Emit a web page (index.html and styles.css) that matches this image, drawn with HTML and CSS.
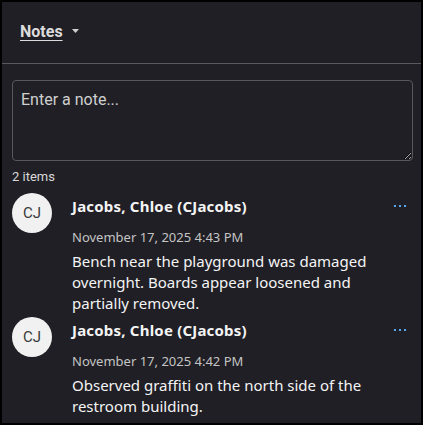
FILE: index.html
```html
<!DOCTYPE html>
<html>
<head>
<meta charset="utf-8">
<link rel="stylesheet" href="styles.css">
</head>
<body>
<div class="panel">
  <div class="header">
    <span class="title">Notes</span>
    <svg class="caret" width="7" height="4" viewBox="0 0 7 4"><path d="M0 0h7L3.5 4z" fill="#d0d0d0"/></svg>
  </div>
  <div class="content">
    <textarea class="note-input" placeholder="Enter a note..."></textarea>
    <div class="count">2 items</div>
    <div class="list">
      <div class="item">
        <div class="avatar">CJ</div>
        <div class="body">
          <div class="top">
            <span class="name">Jacobs, Chloe (CJacobs)</span>
            <svg class="more" width="12" height="4" viewBox="0 0 12 4"><rect x="0" y="1" width="2" height="2" fill="#5aa6ea"/><rect x="5" y="1" width="2" height="2" fill="#5aa6ea"/><rect x="10" y="1" width="2" height="2" fill="#5aa6ea"/></svg>
          </div>
          <div class="date">November 17, 2025 4:43 PM</div>
          <div class="text">Bench near the playground was damaged overnight. Boards appear loosened and partially removed.</div>
        </div>
      </div>
      <div class="item">
        <div class="avatar">CJ</div>
        <div class="body">
          <div class="top">
            <span class="name">Jacobs, Chloe (CJacobs)</span>
            <svg class="more" width="12" height="4" viewBox="0 0 12 4"><rect x="0" y="1" width="2" height="2" fill="#5aa6ea"/><rect x="5" y="1" width="2" height="2" fill="#5aa6ea"/><rect x="10" y="1" width="2" height="2" fill="#5aa6ea"/></svg>
          </div>
          <div class="date">November 17, 2025 4:42 PM</div>
          <div class="text">Observed graffiti on the north side of the restroom building.</div>
        </div>
      </div>
    </div>
  </div>
</div>
</body>
</html>
```
FILE: styles.css
```css
html, body {
  margin: 0;
  padding: 0;
  background: #000;
}
.panel {
  width: 419px;
  height: 421px;
  margin: 2px;
  background: #201f25;
  overflow: hidden;
  font-family: "Noto Sans", sans-serif;
  color: #f2f2f2;
}
.header {
  height: 61px;
  border-bottom: 1px solid #5a5a5e;
  display: flex;
  align-items: center;
  padding-left: 18px;
  gap: 9px;
}
.title {
  font-family: Roboto, sans-serif;
  font-weight: 700;
  font-size: 16px;
  color: #dcdcdc;
  text-decoration: underline;
  text-underline-offset: 3px;
  margin-top: -3px;
}
.caret {
  margin-top: -3px;
}
.content {
  padding: 16px 9px 0 10px;
}
.note-input {
  display: block;
  width: 401px;
  height: 81px;
  box-sizing: border-box;
  background: #201f25;
  border: 1px solid #58585c;
  border-radius: 4px;
  padding: 9px 8px;
  font-family: Roboto, sans-serif;
  font-size: 16px;
  line-height: 20px;
  color: #e0e0e0;
  resize: vertical;
  margin: 0;
}
.note-input::placeholder {
  color: #cfcfcf;
}
.count {
  font-family: Roboto, sans-serif;
  font-size: 13px;
  color: #d8d8d8;
  margin-top: 9px;
  line-height: 14px;
}
.list {
  margin-top: 9px;
  display: flex;
  flex-direction: column;
  gap: 3px;
}
.item {
  display: flex;
  gap: 20px;
}
.avatar {
  width: 40px;
  height: 40px;
  border-radius: 50%;
  background: #f1f1f1;
  color: #3a3a3a;
  font-family: Roboto, sans-serif;
  font-size: 15px;
  display: flex;
  align-items: center;
  justify-content: center;
  flex: none;
}
.body {
  flex: 1;
}
.top {
  display: flex;
  justify-content: space-between;
  align-items: center;
  padding-right: 6px;
}
.name {
  font-weight: 700;
  font-size: 15px;
  line-height: 26px;
  color: #f4f4f4;
  letter-spacing: 0.2px;
}
.date {
  font-size: 13px;
  color: #c4c4c4;
  margin-top: 10px;
  line-height: 16px;
}
.text {
  font-size: 15px;
  line-height: 21px;
  margin-top: 6px;
  color: #f4f4f4;
  padding-right: 24px;
}
```
